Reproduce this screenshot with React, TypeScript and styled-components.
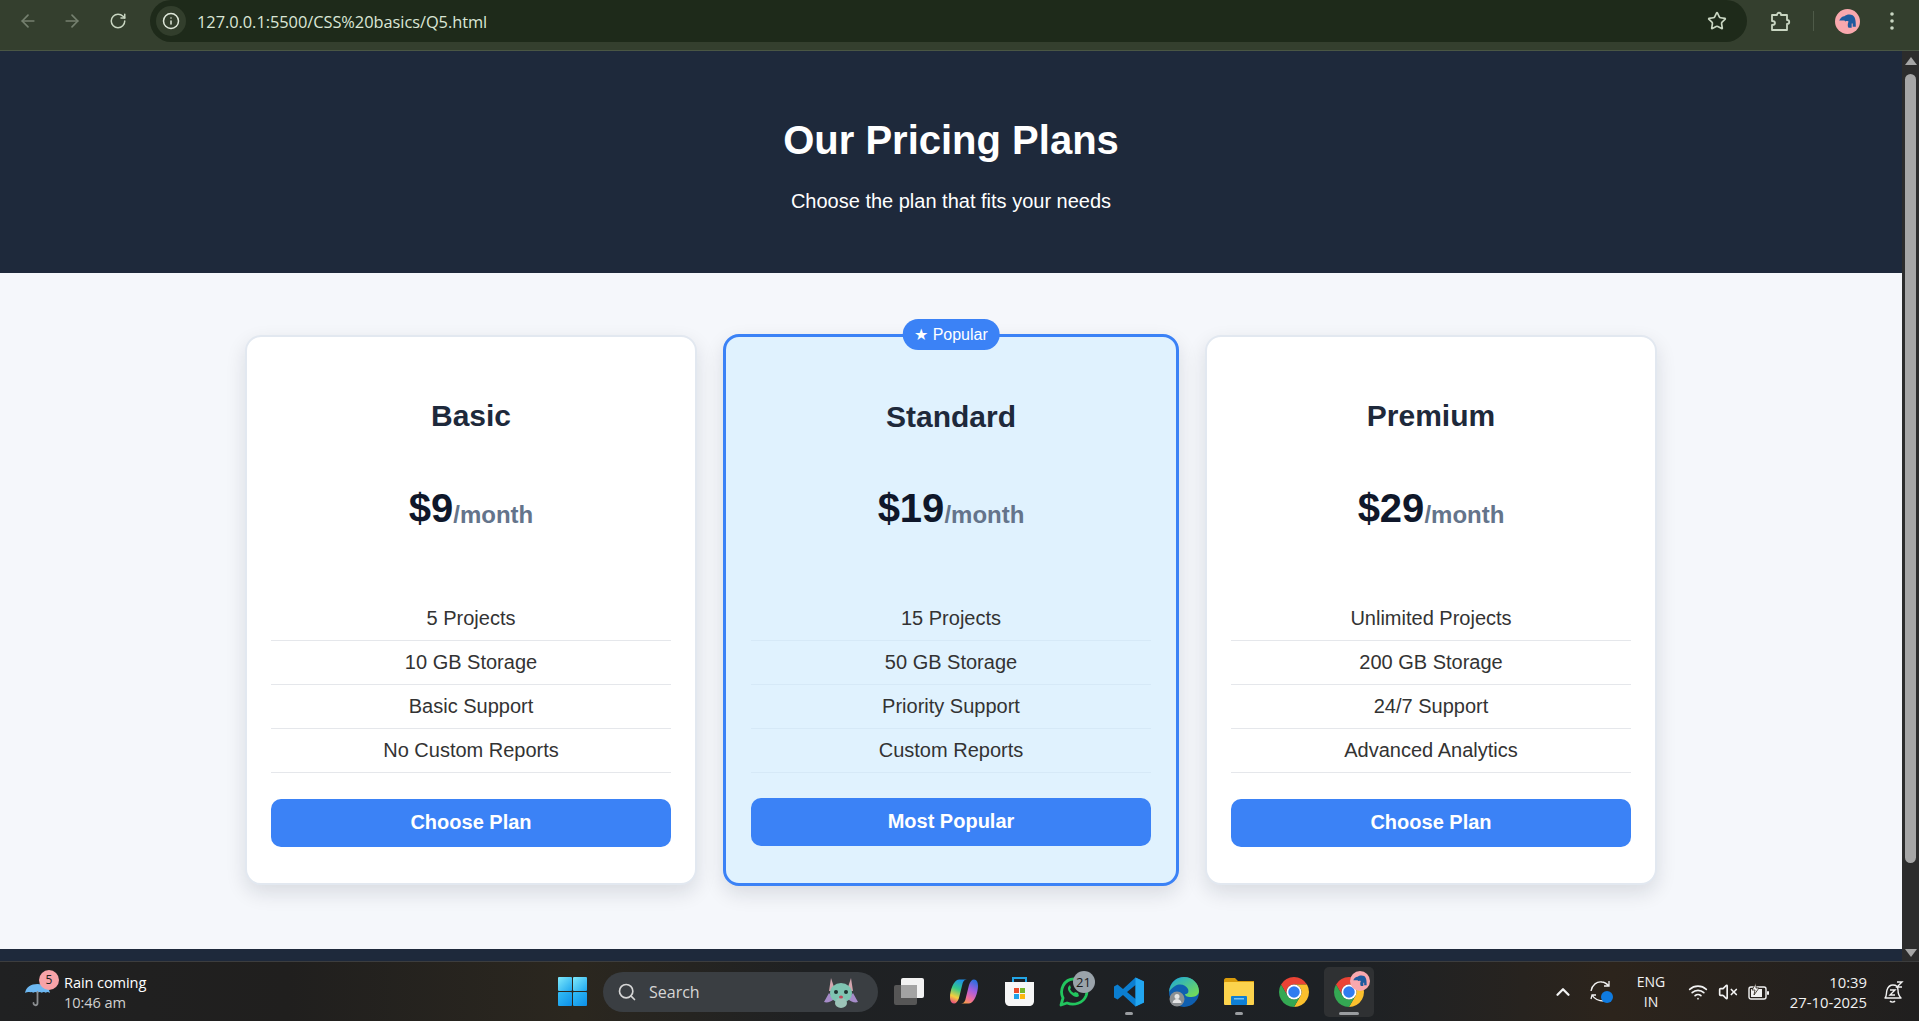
import styled, { createGlobalStyle } from 'styled-components';
import { ArrowLeft, ArrowRight, RotateCw, Info, Star, ChevronUp, Wifi, VolumeX, Search } from 'lucide-react';

const GlobalStyle = createGlobalStyle`
  html, body {
    margin: 0;
    padding: 0;
    overflow: hidden;
    background: #1e293b;
  }
  * {
    box-sizing: border-box;
  }
`;

const Screen = styled.div`
  width: 1919px;
  height: 1021px;
  display: flex;
  flex-direction: column;
  overflow: hidden;
  font-family: 'Liberation Sans', Arial, sans-serif;
`;

/* browser toolbar */
const BrowserBar = styled.div`
  height: 51px;
  flex: none;
  display: flex;
  align-items: flex-start;
  background: #343f2e;
  border-bottom: 1px solid #4a5644;
  color: #c9d6c2;
`;

const NavButton = styled.div<{ $dim?: boolean; $w: number }>`
  width: ${(p) => p.$w}px;
  height: 42px;
  flex: none;
  display: flex;
  align-items: center;
  justify-content: center;
  color: ${(p) => (p.$dim ? '#75806f' : '#c9d6c2')};
`;

const Omnibox = styled.div`
  width: 1597px;
  height: 42px;
  flex: none;
  margin-left: 2px;
  padding: 0 20px 0 6px;
  display: flex;
  align-items: center;
  background: #1e2a1a;
  border-radius: 21px;
`;

const InfoChip = styled.div`
  width: 30px;
  height: 30px;
  flex: none;
  border-radius: 50%;
  background: #323e2c;
  display: flex;
  align-items: center;
  justify-content: center;
  color: #dfe8da;
`;

const UrlText = styled.span`
  margin-left: 11px;
  flex: 1;
  font-family: 'Open Sans', 'Noto Sans', sans-serif;
  font-size: 16.4px;
  letter-spacing: -0.05px;
  color: #dbe6d6;
`;

const Divider = styled.div`
  width: 1px;
  height: 20px;
  margin: 11px 15px 0 0;
  flex: none;
  background: #4e5a48;
`;

/* page area + scrollbar */
const Viewport = styled.div`
  flex: 1;
  min-height: 0;
  display: flex;
`;

const Page = styled.div`
  flex: 1;
  min-width: 0;
  display: flex;
  flex-direction: column;
  background: #f5f7fb;
`;

const Header = styled.header`
  height: 222px;
  flex: none;
  padding-top: 66px;
  background: #1e293b;
  color: #fff;
  text-align: center;
`;

const HeaderTitle = styled.h1`
  margin: 0;
  font-size: 40px;
  line-height: 46px;
  font-weight: 700;
`;

const HeaderSub = styled.p`
  margin: 27px 0 0;
  font-size: 20px;
  line-height: 22px;
`;

const Plans = styled.main`
  height: 676px;
  flex: none;
  padding-top: 61px;
  display: flex;
  justify-content: center;
  align-items: flex-start;
  gap: 26px;
`;

const Card = styled.section<{ $featured?: boolean }>`
  position: relative;
  width: ${(p) => (p.$featured ? 456 : 452)}px;
  margin-top: ${(p) => (p.$featured ? 0 : 1)}px;
  padding: ${(p) => (p.$featured ? '35px 25px 37px' : '34px 24px 36px')};
  border-radius: 16px;
  text-align: center;
  background: ${(p) => (p.$featured ? '#e0f2fe' : '#fff')};
  border: ${(p) => (p.$featured ? '3px solid #3b82f6' : '2px solid #e2e8f0')};
  box-shadow: 0 8px 20px rgba(15, 23, 42, 0.12);
`;

const Badge = styled.div`
  position: absolute;
  top: -18px;
  left: 50%;
  transform: translateX(-50%);
  height: 31px;
  padding: 0 11.5px;
  display: flex;
  align-items: center;
  white-space: nowrap;
  border-radius: 16px;
  background: #3b82f6;
  color: #fff;
  font-size: 16px;
`;

const PlanName = styled.h3`
  margin: 28px 0 0;
  font-size: 30px;
  line-height: 33px;
  font-weight: 700;
  color: #1e293b;
`;

const Price = styled.div<{ $featured?: boolean }>`
  margin-top: ${(p) => (p.$featured ? 52 : 53)}px;
  font-size: 40px;
  line-height: 46px;
  font-weight: 700;
  color: #0f172a;
`;

const Period = styled.span`
  font-size: 24px;
  line-height: 1;
  vertical-align: -1px;
  color: #64748b;
`;

const Features = styled.ul`
  list-style: none;
  margin: 66px 0 0;
  padding: 0;
`;

const Feature = styled.li<{ $featured?: boolean }>`
  height: 44px;
  display: flex;
  align-items: center;
  justify-content: center;
  font-size: 20px;
  color: #333;
  border-bottom: 1px solid ${(p) => (p.$featured ? '#d6e9f7' : '#e5e7eb')};
`;

const PlanButton = styled.button<{ $featured?: boolean }>`
  display: block;
  width: 100%;
  height: 48px;
  margin-top: ${(p) => (p.$featured ? 25 : 26)}px;
  padding: 0 0 2px;
  border: 0;
  border-radius: 10px;
  background: #3b82f6;
  color: #fff;
  font-family: inherit;
  font-size: 20px;
  font-weight: 700;
`;

const Footer = styled.footer`
  flex: 1;
  background: #1e293b;
`;

const Scrollbar = styled.div`
  width: 17px;
  flex: none;
  display: flex;
  flex-direction: column;
  align-items: center;
  background: #2c2c2c;
`;

const ScrollArrow = styled.div<{ $down?: boolean }>`
  flex: none;
  margin: ${(p) => (p.$down ? '0 0 4px' : '6px 0 0')};
  width: 0;
  height: 0;
  border-left: 6px solid transparent;
  border-right: 6px solid transparent;
  border-bottom: ${(p) => (p.$down ? '0' : '8px solid #a6a6a6')};
  border-top: ${(p) => (p.$down ? '8px solid #a6a6a6' : '0')};
`;

const ScrollThumb = styled.div`
  width: 11px;
  height: 789px;
  margin-top: 9px;
  flex: none;
  border-radius: 6px;
  background: #a6a6a6;
`;

const ScrollGap = styled.div`
  flex: 1;
`;

/* windows taskbar */
const Taskbar = styled.div`
  height: 60px;
  flex: none;
  display: grid;
  grid-template-columns: 558px auto 1fr;
  align-items: center;
  border-top: 1px solid #3c3d3e;
  background: linear-gradient(
    90deg,
    #202122 0%,
    #201f1e 15%,
    #2b271f 30%,
    #1f2123 42%,
    #1d2125 70%,
    #2c241c 84%,
    #201f1f 100%
  );
`;

const Weather = styled.div`
  position: relative;
  padding-left: 25px;
  display: flex;
  align-items: center;
  gap: 14px;
`;

const UmbrellaSlot = styled.div`
  margin-top: 6px;
  display: flex;
`;

const WeatherBadge = styled.span`
  position: absolute;
  left: 39px;
  top: -2px;
  width: 20px;
  height: 20px;
  border-radius: 50%;
  background: #f8a3a8;
  color: #222;
  font-family: 'Open Sans', sans-serif;
  font-size: 12px;
  line-height: 20px;
  text-align: center;
`;

const WeatherText = styled.div`
  font-family: 'Open Sans', 'Noto Sans', sans-serif;
  font-size: 14.6px;
  line-height: 20px;
  letter-spacing: -0.1px;
  color: #d0d0d0;
`;

const WeatherTitle = styled.div`
  color: #fff;
`;

const Center = styled.div`
  display: flex;
  align-items: center;
`;

const StartButton = styled.div`
  width: 45px;
  flex: none;
  display: flex;
`;

const SearchPill = styled.div`
  width: 275px;
  height: 40px;
  flex: none;
  margin-right: 3.5px;
  padding: 0 20px 0 14px;
  display: flex;
  align-items: center;
  gap: 12px;
  border-radius: 20px;
  background: #3a3e42;
  color: #d6d6d6;
  font-family: 'Open Sans', 'Noto Sans', sans-serif;
  font-size: 16px;
`;

const SearchLabel = styled.span`
  flex: 1;
`;

const Tile = styled.div<{ $active?: boolean }>`
  position: relative;
  width: ${(p) => (p.$active ? 50 : 55)}px;
  height: 50px;
  margin: 0 ${(p) => (p.$active ? 2.5 : 0)}px;
  flex: none;
  display: flex;
  align-items: center;
  justify-content: center;
  border-radius: 5px;
  background: ${(p) => (p.$active ? '#2f3133' : 'transparent')};
`;

const TileDot = styled.span<{ $wide?: boolean }>`
  position: absolute;
  bottom: 2px;
  left: 50%;
  transform: translateX(-50%);
  width: ${(p) => (p.$wide ? 20 : 8)}px;
  height: 3px;
  border-radius: 2px;
  background: #9a9da0;
`;

const CountBadge = styled.span`
  position: absolute;
  top: 4px;
  right: 7px;
  width: 22px;
  height: 22px;
  border-radius: 50%;
  background: #9aa3aa;
  color: #1b1b1b;
  font-family: 'Open Sans', sans-serif;
  font-size: 13px;
  line-height: 22px;
  text-align: center;
`;

const AvatarOverlay = styled.span`
  position: absolute;
  top: 4px;
  right: 4px;
  display: flex;
`;

const Tray = styled.div`
  justify-self: end;
  display: flex;
  align-items: center;
  padding-right: 6px;
  color: #f2f2f2;
`;

const TrayCell = styled.div<{ $w: number }>`
  width: ${(p) => p.$w}px;
  flex: none;
  display: flex;
  align-items: center;
  justify-content: center;
`;

const TrayText = styled.div<{ $w: number; $right?: boolean }>`
  width: ${(p) => p.$w}px;
  flex: none;
  font-family: 'Open Sans', 'Noto Sans', sans-serif;
  font-size: ${(p) => (p.$right ? 14.8 : 14)}px;
  line-height: 20px;
  white-space: nowrap;
  text-align: ${(p) => (p.$right ? 'right' : 'center')};
  padding-right: ${(p) => (p.$right ? 6 : 0)}px;
`;

const plans = [
  {
    name: 'Basic',
    price: '$9',
    features: ['5 Projects', '10 GB Storage', 'Basic Support', 'No Custom Reports'],
    cta: 'Choose Plan',
  },
  {
    name: 'Standard',
    price: '$19',
    features: ['15 Projects', '50 GB Storage', 'Priority Support', 'Custom Reports'],
    cta: 'Most Popular',
    featured: true,
  },
  {
    name: 'Premium',
    price: '$29',
    features: ['Unlimited Projects', '200 GB Storage', '24/7 Support', 'Advanced Analytics'],
    cta: 'Choose Plan',
  },
];

const Avatar = ({ size }: { size: number }) => (
  <svg width={size} height={size} viewBox="0 0 24 24">
    <circle cx="12" cy="12" r="12" fill="#f9a8ae" />
    <path
      d="M4 11c1-2 3-4 5-4 2-2 6-2 8-1 3 2 3 7 3 11h-3v-3h-1v4h-3c-1-1-1-4 0-6-2-1-3 0-3 0l-1-1H5z"
      fill="#1f5a9e"
    />
  </svg>
);

const PuzzleIcon = () => (
  <svg width="21" height="21" viewBox="0 0 21 21" fill="none" stroke="#c9d6c2" strokeWidth="1.8" strokeLinejoin="round">
    <path d="M2 4h5c0-3 4-3 4 0h6v5c3 0 3 4 0 4v6H2v-5c2 0 3-1 3-2s-1-2-3-2z" />
  </svg>
);

const DotsIcon = () => (
  <svg width="6" height="18" viewBox="0 0 6 18" fill="#c9d6c2">
    <circle cx="3" cy="2" r="1.8" />
    <circle cx="3" cy="9" r="1.8" />
    <circle cx="3" cy="16" r="1.8" />
  </svg>
);

const UmbrellaIcon = () => (
  <svg width="25" height="24" viewBox="0 0 25 24" fill="none">
    <path d="M0 10C1 4 6 1 12.500 1S24 4 25 10c-2-1.300-3-1.300-4.200-.3-1.300-1-2.800-1-4 0-1.300-1-3-1-4.300 0-1.300-1-3-1-4.300 0-1.200-1-2.700-1-4 0C7 8.700 2 8.700 0 10z" fill="#6db8f2" />
    <path d="M12.500 9v11c0 3-4 3-4 0" stroke="#8a8d90" strokeWidth="1.800" strokeLinecap="round" />
  </svg>
);

const WindowsLogo = () => (
  <svg width="29" height="29" viewBox="0 0 29 29">
    <defs>
      <linearGradient id="winA" x1="0" y1="0" x2="1" y2="1">
        <stop offset="0" stopColor="#7fe9fb" />
        <stop offset="1" stopColor="#1ea7ef" />
      </linearGradient>
      <linearGradient id="winB" x1="0" y1="0" x2="1" y2="1">
        <stop offset="0" stopColor="#33bdf6" />
        <stop offset="1" stopColor="#0c8fe8" />
      </linearGradient>
    </defs>
    <rect width="14" height="14" rx="1" fill="url(#winA)" />
    <rect x="15" width="14" height="14" rx="1" fill="url(#winA)" />
    <rect y="15" width="14" height="14" rx="1" fill="url(#winB)" />
    <rect x="15" y="15" width="14" height="14" rx="1" fill="url(#winB)" />
  </svg>
);

const Mascot = () => (
  <svg width="34" height="32" viewBox="0 0 34 32">
    <path d="M5 17 0 26c3 1 7 0 10-3zM29 17l5 9c-3 1-7 0-10-3z" fill="#a68cc9" />
    <path d="M7 2l3 9h14l3-9 2 13H5z" fill="#d3a5ae" />
    <ellipse cx="17" cy="17" rx="11" ry="10" fill="#7fc4b2" />
    <ellipse cx="17" cy="27" rx="6" ry="5" fill="#9cc4b8" />
    <circle cx="12" cy="16" r="2" fill="#213331" />
    <circle cx="22" cy="16" r="2" fill="#213331" />
    <ellipse cx="17" cy="21" rx="2" ry="1.500" fill="#c2455a" />
  </svg>
);

const TaskViewIcon = () => (
  <svg width="30" height="27" viewBox="0 0 30 27">
    <rect x="0" y="7" width="23" height="20" rx="2" fill="#565656" />
    <rect x="7" y="0" width="23" height="20" rx="2" fill="#f2f2f2" />
    <rect x="7" y="7" width="16" height="13" fill="#a3a3a3" />
  </svg>
);

const CopilotIcon = () => (
  <svg width="28" height="25" viewBox="0 0 28 25">
    <defs>
      <linearGradient id="copA" x1="0.6" y1="0" x2="0.3" y2="1">
        <stop offset="0" stopColor="#1d8fe8" />
        <stop offset="0.4" stopColor="#35c98a" />
        <stop offset="0.75" stopColor="#f5cf3e" />
        <stop offset="1" stopColor="#e8557a" />
      </linearGradient>
      <linearGradient id="copB" x1="0.7" y1="0" x2="0.3" y2="1">
        <stop offset="0" stopColor="#2b6fe0" />
        <stop offset="0.4" stopColor="#a35ee0" />
        <stop offset="0.75" stopColor="#ef6ba0" />
        <stop offset="1" stopColor="#f59a4c" />
      </linearGradient>
    </defs>
    <path d="M9 .5h8c-2 0-3.500 1-4.300 3.500L9 19c-1 3.500-3 5.500-5 5.500-3 0-4-3-4-6.500C0 12 3.500.5 9 .5z" fill="url(#copA)" />
    <path d="M19 24.500h-8c2 0 3.500-1 4.300-3.500L19 6c1-3.500 3-5.500 5-5.500 3 0 4 3 4 6.500 0 6-3.500 17.500-9 17.500z" fill="url(#copB)" />
  </svg>
);

const StoreIcon = () => (
  <svg width="29" height="29" viewBox="0 0 29 29">
    <path d="M8 6V1h13v5" fill="none" stroke="#22a5e6" strokeWidth="2" />
    <path d="M0 5h29v19c0 3-2 5-5 5H5c-3 0-5-2-5-5z" fill="#f6f6f6" />
    <rect x="9" y="11" width="5" height="5" fill="#ea4b2b" />
    <rect x="15" y="11" width="5" height="5" fill="#78b72a" />
    <rect x="9" y="17" width="5" height="5" fill="#1ea1e8" />
    <rect x="15" y="17" width="5" height="5" fill="#fcb80f" />
  </svg>
);

const WhatsappIcon = () => (
  <svg width="30" height="30" viewBox="0 0 30 30" fill="none">
    <path d="M2 28l2-7C0 13 5 2 15 2c10 0 15 9 12 17-3 7-12 10-19 7z" stroke="#22c55e" strokeWidth="2.800" strokeLinejoin="round" />
    <path d="M10 9c-2 2-1 5 2 8s6 4 8 2l-1-3-3-1-1 1c-2-1-3-2-4-4l1-1-1-3z" fill="#22c55e" />
  </svg>
);

const VscodeIcon = () => (
  <svg width="30" height="30" viewBox="0 0 30 30">
    <path d="M21.500 .5 30 4.500v21l-8.500 4L9 18l-5.500 4.500L0 20.500v-11l3.500-2L9 12zM21.500 8 13 15l8.500 7z" fill="#0b7ed0" fillRule="evenodd" />
    <path d="M21.500 .5 30 4.500v21l-8.500 4z" fill="#22a6f0" />
  </svg>
);

const EdgeIcon = () => (
  <svg width="30" height="30" viewBox="0 0 30 30">
    <defs>
      <linearGradient id="edgeA" x1="0" y1="0" x2="1" y2="1">
        <stop offset="0" stopColor="#1aa6dd" />
        <stop offset="1" stopColor="#7ce04a" />
      </linearGradient>
    </defs>
    <circle cx="15" cy="15" r="15" fill="#0f5fb0" />
    <path d="M0 15C1 5 8 0 15 0c9 0 15 7 15 14 0 5-5 6-9 6-3 0-5-1-5-3 3 0 4-2 3-5-2-4-8-6-13-3-3 2-5 4-6 6z" fill="url(#edgeA)" />
    <circle cx="8" cy="22" r="7.500" fill="#8b8f92" />
    <circle cx="8" cy="19.500" r="2.500" fill="#e4e4e4" />
    <path d="M3.500 26c.5-3 2.500-4 4.500-4s4 1 4.500 4z" fill="#e4e4e4" />
  </svg>
);

const FolderIcon = () => (
  <svg width="30" height="27" viewBox="0 0 30 27">
    <path d="M0 2c0-1 1-2 2-2h9l3 3h16v8H0z" fill="#d99b0b" />
    <rect y="4" width="30" height="23" rx="1" fill="#fcd34d" />
    <rect x="7" y="18" width="16" height="9" rx="1" fill="#0f7fd4" />
    <rect x="10" y="20" width="10" height="1.500" fill="#7cc4f2" />
  </svg>
);

const ChromeIcon = () => (
  <svg width="30" height="30" viewBox="0 0 24 24">
    <path d="M1.610 6A12 12 0 0 1 22.390 6H12A6 6 0 0 0 6.804 15z" fill="#ea4335" />
    <path d="M22.390 6A12 12 0 0 1 12 24L17.196 15A6 6 0 0 0 12 6z" fill="#fbc02d" />
    <path d="M12 24A12 12 0 0 1 1.610 6L6.804 15A6 6 0 0 0 17.196 15z" fill="#34a853" />
    <circle cx="12" cy="12" r="6" fill="#fff" />
    <circle cx="12" cy="12" r="4.600" fill="#2f7cf0" />
  </svg>
);

const SyncIcon = () => (
  <svg width="26" height="26" viewBox="0 0 26 26" fill="none" stroke="#f2f2f2" strokeWidth="1.300">
    <path d="M2 12C3 6 8 2 13 3c3 0 5 2 7 4M20 2v5h-5" />
    <path d="M2 20l1-4h4M3 16c3 5 7 6 12 6" />
    <circle cx="18" cy="18" r="6" fill="#0f7be0" stroke="none" />
  </svg>
);

const BatteryIcon = () => (
  <svg width="22" height="18" viewBox="0 0 22 18" fill="none">
    <rect x="1" y="4" width="17" height="12" rx="2" stroke="#f2f2f2" strokeWidth="1.400" />
    <rect x="19" y="8" width="2" height="4" rx="1" fill="#f2f2f2" />
    <path d="M3 6h11v8H3z" fill="#f2f2f2" />
    <path d="M8 0 4 7h3l-1 5 5-7H8z" fill="#f2f2f2" stroke="#2c241c" strokeWidth="0.800" />
  </svg>
);

const BellSnooze = () => (
  <svg width="22" height="24" viewBox="0 0 22 24" fill="none" stroke="#f2f2f2" strokeWidth="1.400">
    <path d="M3 18c2-2 1-5 2-8 1-3 3-5 6-5 3 0 5 2 5 5 0 3 1 6 3 8z" strokeLinejoin="round" />
    <path d="M8 21c1 1.500 4 1.500 5 0" />
    <path d="M8 10h5l-5 5h5M15 2h5l-5 5h5" />
  </svg>
);

const App = () => {
  return (
    <>
      <GlobalStyle />
      <Screen>
        <BrowserBar>
          <NavButton $w={56} $dim><ArrowLeft size={20} /></NavButton>
          <NavButton $w={32} $dim><ArrowRight size={20} /></NavButton>
          <NavButton $w={60}><RotateCw size={18} /></NavButton>
          <Omnibox>
            <InfoChip><Info size={18} /></InfoChip>
            <UrlText>127.0.0.1:5500/CSS%20basics/Q5.html</UrlText>
            <Star size={20} />
          </Omnibox>
          <NavButton $w={66}><PuzzleIcon /></NavButton>
          <Divider />
          <NavButton $w={36}><Avatar size={25} /></NavButton>
          <NavButton $w={54}><DotsIcon /></NavButton>
        </BrowserBar>

        <Viewport>
          <Page>
            <Header>
              <HeaderTitle>Our Pricing Plans</HeaderTitle>
              <HeaderSub>Choose the plan that fits your needs</HeaderSub>
            </Header>
            <Plans>
              {plans.map((plan) => (
                <Card key={plan.name} $featured={plan.featured}>
                  {plan.featured && <Badge>★ Popular</Badge>}
                  <PlanName>{plan.name}</PlanName>
                  <Price $featured={plan.featured}>
                    {plan.price}
                    <Period>/month</Period>
                  </Price>
                  <Features>
                    {plan.features.map((f) => (
                      <Feature key={f} $featured={plan.featured}>{f}</Feature>
                    ))}
                  </Features>
                  <PlanButton $featured={plan.featured}>{plan.cta}</PlanButton>
                </Card>
              ))}
            </Plans>
            <Footer />
          </Page>
          <Scrollbar>
            <ScrollArrow />
            <ScrollThumb />
            <ScrollGap />
            <ScrollArrow $down />
          </Scrollbar>
        </Viewport>

        <Taskbar>
          <Weather>
            <UmbrellaSlot><UmbrellaIcon /></UmbrellaSlot>
            <WeatherBadge>5</WeatherBadge>
            <WeatherText>
              <WeatherTitle>Rain coming</WeatherTitle>
              10:46 am
            </WeatherText>
          </Weather>
          <Center>
            <StartButton><WindowsLogo /></StartButton>
            <SearchPill>
              <Search size={20} />
              <SearchLabel>Search</SearchLabel>
              <Mascot />
            </SearchPill>
            <Tile><TaskViewIcon /></Tile>
            <Tile><CopilotIcon /></Tile>
            <Tile><StoreIcon /></Tile>
            <Tile>
              <WhatsappIcon />
              <CountBadge>21</CountBadge>
            </Tile>
            <Tile><VscodeIcon /><TileDot /></Tile>
            <Tile><EdgeIcon /></Tile>
            <Tile><FolderIcon /><TileDot /></Tile>
            <Tile><ChromeIcon /></Tile>
            <Tile $active>
              <ChromeIcon />
              <AvatarOverlay><Avatar size={20} /></AvatarOverlay>
              <TileDot $wide />
            </Tile>
          </Center>
          <Tray>
            <TrayCell $w={46}><ChevronUp size={22} strokeWidth={2.5} /></TrayCell>
            <TrayCell $w={32}><SyncIcon /></TrayCell>
            <TrayText $w={66}>ENG<br />IN</TrayText>
            <TrayCell $w={28}><Wifi size={20} /></TrayCell>
            <TrayCell $w={32}><VolumeX size={20} /></TrayCell>
            <TrayCell $w={30}><BatteryIcon /></TrayCell>
            <TrayText $w={99} $right>10:39<br />27-10-2025</TrayText>
            <TrayCell $w={40}><BellSnooze /></TrayCell>
          </Tray>
        </Taskbar>
      </Screen>
    </>
  );
};

export default App;
